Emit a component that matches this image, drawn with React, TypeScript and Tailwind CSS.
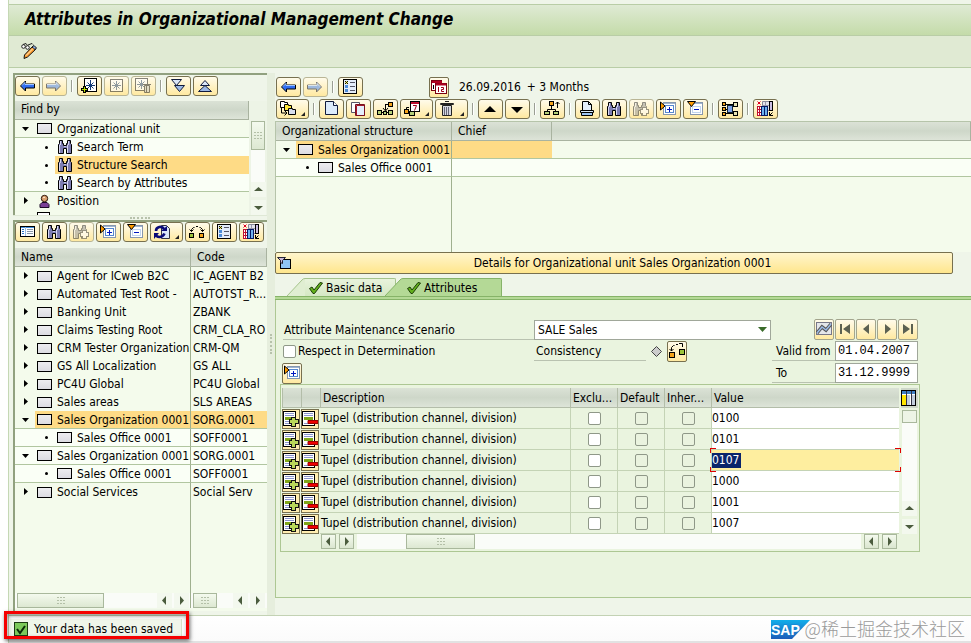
import type { ReactNode } from 'react';

interface TreeItem {
  label: string;
  code?: string;
  state: 'open' | 'closed' | 'leaf';
  level: number;
  icon: 'box' | 'search' | 'person';
  selected?: boolean;
  lined?: boolean;
}

const searchTree: TreeItem[] = [
  { label: 'Organizational unit', state: 'open', level: 0, icon: 'box', lined: true },
  { label: 'Search Term', state: 'leaf', level: 1, icon: 'search' },
  { label: 'Structure Search', state: 'leaf', level: 1, icon: 'search', selected: true },
  { label: 'Search by Attributes', state: 'leaf', level: 1, icon: 'search', lined: true },
  { label: 'Position', state: 'closed', level: 0, icon: 'person' },
];

const units: TreeItem[] = [
  { label: 'Agent for ICweb B2C', code: 'IC_AGENT B2', state: 'closed', level: 0, icon: 'box' },
  { label: 'Automated Test Root -', code: 'AUTOTST_R...', state: 'closed', level: 0, icon: 'box' },
  { label: 'Banking Unit', code: 'ZBANK', state: 'closed', level: 0, icon: 'box' },
  { label: 'Claims Testing Root', code: 'CRM_CLA_RO', state: 'closed', level: 0, icon: 'box' },
  { label: 'CRM Tester Organization', code: 'CRM-QM', state: 'closed', level: 0, icon: 'box' },
  { label: 'GS All Localization', code: 'GS ALL', state: 'closed', level: 0, icon: 'box' },
  { label: 'PC4U Global', code: 'PC4U Global', state: 'closed', level: 0, icon: 'box' },
  { label: 'Sales areas', code: 'SLS AREAS', state: 'closed', level: 0, icon: 'box' },
  { label: 'Sales Organization 0001', code: 'SORG.0001', state: 'open', level: 0, icon: 'box', selected: true, lined: true },
  { label: 'Sales Office 0001', code: 'SOFF0001', state: 'leaf', level: 1, icon: 'box', lined: true },
  { label: 'Sales Organization 0001', code: 'SORG.0001', state: 'open', level: 0, icon: 'box', lined: true },
  { label: 'Sales Office 0001', code: 'SOFF0001', state: 'leaf', level: 1, icon: 'box', lined: true },
  { label: 'Social Services', code: 'Social Serv', state: 'closed', level: 0, icon: 'box' },
];

const structure: TreeItem[] = [
  { label: 'Sales Organization 0001', state: 'open', level: 0, icon: 'box', selected: true, lined: true },
  { label: 'Sales Office 0001', state: 'leaf', level: 1, icon: 'box', lined: true },
];

const values = ['0100', '0101', '0107', '1000', '1001', '1007'];

/* ---------- icons ---------- */

function Svg({ children, className = 'w-4 h-4' }: { children: ReactNode; className?: string }) {
  return (
    <svg viewBox="0 0 16 16" fill="none" className={`${className} shrink-0`} aria-hidden="true">
      {children}
    </svg>
  );
}

const icons = {
  back: (
    <Svg>
      <path d="M1.500 8l5-5v3h9v4h-9v3z" fill="#2f6cf0" stroke="#000" />
      <path d="M3 7.500l3-3v2h9" stroke="#9cc4ff" />
    </Svg>
  ),
  forward: (
    <Svg>
      <path d="M14.500 8l-5-5v3h-9v4h9v3z" fill="#4f8af0" stroke="#112" />
      <path d="M1 6.500h9v-2l3 3" stroke="#c5dcff" />
    </Svg>
  ),
  star: (
    <Svg>
      <rect x="2.500" y="1.500" width="12" height="12" fill="#fff" stroke="#222" />
      <path d="M8.500 3v9M4 7.500h9M5.500 4.500l6 6M11.500 4.500l-6 6" stroke="#34507a" />
    </Svg>
  ),
  starAdd: (
    <Svg>
      <rect x="3.500" y="0.500" width="12" height="13" fill="#fff" stroke="#000" />
      <path d="M9.500 2v10M5 7.500h9M6.500 4.500l6 6M12.500 4.500l-6 6" stroke="#123a78" />
      <path d="M3.500 8v7M0 11.500h7" stroke="#000" strokeWidth="3" />
      <path d="M3.500 9v5M1 11.500h5" stroke="#b8e000" />
    </Svg>
  ),
  starDelete: (
    <Svg>
      <rect x="0.500" y="0.500" width="12" height="12" fill="#fff" stroke="#222" />
      <path d="M6.500 2v9M2 6.500h9M3.500 3.500l6 6M9.500 3.500l-6 6" stroke="#34507a" />
      <path d="M9.500 7.500h5v7h-5z" fill="#ccc" stroke="#222" />
      <path d="M8 6.500h8M11.500 8v6" stroke="#222" />
    </Svg>
  ),
  expandAll: (
    <Svg>
      <path d="M1.500 1.500h10l-5 6z" fill="#dbe6f8" stroke="#101a3c" />
      <path d="M4.500 7.500h10l-5 6z" fill="#9cb8e6" stroke="#101a3c" />
    </Svg>
  ),
  collapseAll: (
    <Svg>
      <path d="M3.500 7.500h9L8 2.500z" fill="#dbe6f8" stroke="#101a3c" />
      <path d="M1.500 13.500h13L8 7.500z" fill="#9cb8e6" stroke="#101a3c" />
    </Svg>
  ),
  list: (
    <Svg>
      <rect x="1.500" y="2.500" width="14" height="10" fill="#fff" stroke="#000" />
      <path d="M2 3.500h4M7 3.500h8" stroke="#3f8ce0" />
      <path d="M6.500 3v9" stroke="#9cc0e8" />
      <path d="M3 5.500h2M3 7.500h2M3 9.500h2" stroke="#2c73c8" />
      <path d="M8 5.500h6M8 7.500h6M8 9.500h6" stroke="#8a97a8" />
    </Svg>
  ),
  find: (
    <Svg>
      <path d="M2.500 1.500h3v3h1v2h3v-2h1v-3h3v3l1 1v9h-5v-5h-3v5h-5v-9l1-1z" fill="#7d7db2" stroke="#000" />
      <path d="M3.500 2v4M2.500 6v8M11.500 2v4M10.500 6v8" stroke="#d8d8f4" />
      <path d="M7 7.500h2" stroke="#c8c8e8" />
    </Svg>
  ),
  findNext: (
    <Svg>
      <path d="M1.500 1.500h3v3h1v2h3v-2h1v-3h3v3l1 1v9h-5v-5h-3v5h-5v-9l1-1z" fill="#999" stroke="#333" />
      <path d="M2.500 2v4M1.500 6v8" stroke="#eee" />
      <path d="M11.500 6v9M7 10.500h9" stroke="#444" strokeWidth="5" />
      <path d="M11.500 7v7M8 10.500h7" stroke="#fff" strokeWidth="3" />
    </Svg>
  ),
  expand: (
    <Svg>
      <rect x="3.500" y="1.500" width="12" height="12" fill="#fff" stroke="#8797ae" />
      <path d="M4 2.500h11" stroke="#9db3d0" />
      <rect x="5.500" y="4.500" width="8" height="7" fill="#fff" stroke="#5688cf" />
      <path d="M9.500 6v5M7 8.500h5" stroke="#0016c0" />
      <path d="M.5 1v8L5 5z" fill="#ff9c00" stroke="#000" />
    </Svg>
  ),
  collapse: (
    <Svg>
      <rect x="3.500" y="1.500" width="12" height="12" fill="#fff" stroke="#8797ae" />
      <path d="M4 2.500h11" stroke="#9db3d0" />
      <rect x="5.500" y="5.500" width="8" height="6" fill="#fff" stroke="#c0d4ee" />
      <path d="M7 8.500h5" stroke="#0016c0" />
      <path d="M.5.500h8l-4 5z" fill="#ff9c00" stroke="#000" />
    </Svg>
  ),
  refresh: (
    <Svg>
      <path d="M7.500 1.500h5l3 3v10h-8z" fill="#dbe6f8" stroke="#334" />
      <path d="M10 5C8 1.500 2 2.500 2 7M1.500 10c1 4 7 4 9-.5" stroke="#0a0a78" strokeWidth="2.600" />
      <path d="M7 7h6V2zM5 9H0v6z" fill="#0a0a78" />
    </Svg>
  ),
  relation: (
    <Svg>
      <path d="M2.500 7.500v-2l2-2h1M7 2.500h2M10.500 3.500h1l2 2v2M.5 5.500l2 2 2-2M11.500 5.500l2 2 2-2" stroke="#000" />
      <rect x="0.500" y="9.500" width="4" height="4" fill="#9dc43c" stroke="#000" />
      <rect x="10.500" y="9.500" width="4" height="4" fill="#f5a31a" stroke="#000" />
    </Svg>
  ),
  checklist: (
    <Svg>
      <rect x="1.500" y="0.500" width="13" height="14" fill="#e3ecfa" stroke="#000" />
      <rect x="3" y="2" width="3" height="3" fill="#f2ee6a" />
      <path d="M3 2l3 3M6 2L3 5" stroke="#111" />
      <rect x="3" y="6" width="3" height="3" fill="#4d8bd8" />
      <rect x="3" y="10" width="3" height="3" fill="#4d8bd8" />
      <path d="M8 3.500h5M8 7.500h5M8 11.500h5" stroke="#556" />
    </Svg>
  ),
  columns: (
    <Svg>
      <path d="M5.500.500h10v9h-10z" fill="#e4e4ec" stroke="#889" />
      <path d="M8.500 1v8M5 4.500h7" stroke="#99a" />
      <rect x="12.500" y="0.500" width="3" height="9" fill="#cdbfe4" stroke="#000" />
      <rect x="0.500" y="5.500" width="4" height="9" fill="#fff" stroke="#c01030" />
      <path d="M1 8.500h4M1 11.500h4M2.500 6v8" stroke="#c01030" />
      <rect x="4.500" y="5.500" width="3" height="9" fill="#6fb2ef" stroke="#061a66" />
      <rect x="7.500" y="5.500" width="3" height="9" fill="#6fb2ef" stroke="#061a66" />
      <path d="M.5.500l3 3M3.500.500l-3 3" stroke="#e00020" />
      <path d="M15.500 11.500l-3 3M12.500 11v3.500H16" stroke="#000" />
    </Svg>
  ),
  calendar: (
    <Svg>
      <rect x="0.500" y="1.500" width="10" height="10" fill="#fff" stroke="#7a0010" />
      <path d="M1 3h10" stroke="#b00020" strokeWidth="2" />
      <path d="M2.500 6v4" stroke="#000" />
      <rect x="4.500" y="4.500" width="11" height="10" fill="#fff" stroke="#7a0010" />
      <path d="M5 5.500h10" stroke="#b00020" strokeWidth="2" />
      <path d="M7.500 8v5M10 8.500h2.500v2h-2v2H13" stroke="#a00018" />
    </Svg>
  ),
  stack: (
    <Svg>
      <path d="M.5.500h4v1h3v5h-7z" fill="#fff" stroke="#000" />
      <path d="M4.500 3.500h4v1h3v5h-7z" fill="#ffe83a" stroke="#000" />
      <path d="M8.500 7.500h4v1h3v5h-7z" fill="#d7dded" stroke="#000" />
      <path d="M1.500 7v5h5M4.500 9.500l2.500 2.500-2.500 2.500" stroke="#000" />
    </Svg>
  ),
  page: (
    <Svg>
      <path d="M2.500.500h8l4 4v9h-12z" fill="#dcebfc" stroke="#101a3c" />
      <path d="M10.500.500v4h4" fill="#fff" stroke="#101a3c" />
    </Svg>
  ),
  copy: (
    <Svg>
      <path d="M1.500 1.500h8v10h-8z" fill="#fff" stroke="#556" />
      <path d="M6.500 4.500h8v10h-8z" fill="#e4eefc" stroke="#a01828" />
      <path d="M5.500 3.500h9v11h-9z" stroke="#7a1020" />
    </Svg>
  ),
  assign: (
    <Svg>
      <path d="M5 11.500h6M8.500 3v6M12 3.500H9M6 7l2.500 3L11 7" stroke="#000" />
      <rect x="0.500" y="9.500" width="4" height="4" fill="#b5cf78" stroke="#000" />
      <rect x="6.500" y="10.500" width="3" height="3" fill="#b5cf78" stroke="#000" />
      <rect x="11.500" y="9.500" width="4" height="4" fill="#b5cf78" stroke="#000" />
      <rect x="11.500" y="1.500" width="4" height="4" fill="#f5a31a" stroke="#000" />
    </Svg>
  ),
  assignDate: (
    <Svg>
      <path d="M2.500 8V6.500H5M5 12.500h3" stroke="#000" />
      <rect x="0.500" y="8.500" width="4" height="4" fill="#f5a31a" stroke="#000" />
      <rect x="5.500" y="10.500" width="5" height="4" fill="#b5cf78" stroke="#000" />
      <rect x="6.500" y="0.500" width="9" height="10" fill="#fff" stroke="#000" />
      <path d="M7 2h8" stroke="#c01030" strokeWidth="2" />
      <path d="M9 4.500h3.500l-2 5" stroke="#a00018" />
    </Svg>
  ),
  trash: (
    <Svg>
      <path d="M3.500 4.500h9v10h-9z" fill="#d5d8e2" stroke="#222" />
      <path d="M5.500 6v8M7.500 6v8M9.500 6v8" stroke="#667" />
      <path d="M1.500 2.500h13v1h-13z" fill="#fff" stroke="#222" />
      <path d="M6 .500h4" stroke="#222" />
    </Svg>
  ),
  up: (
    <Svg>
      <path d="M2 11h12L8 5z" fill="#000" />
    </Svg>
  ),
  down: (
    <Svg>
      <path d="M2 6h12l-6 6z" fill="#000" />
    </Svg>
  ),
  moveUp: (
    <Svg>
      <path d="M7.500 5v3M3.500 10V8.500h8V10M13.500 1v6M11.500 3l2-2 2 2" stroke="#000" />
      <rect x="5.500" y="0.500" width="4" height="4" fill="#f5a31a" stroke="#000" />
      <rect x="0.500" y="10.500" width="5" height="3" fill="#b5cf78" stroke="#000" />
      <rect x="9.500" y="10.500" width="5" height="3" fill="#b5cf78" stroke="#000" />
    </Svg>
  ),
  print: (
    <Svg>
      <path d="M3.500.500h6l3 3v6h-9z" fill="#e4effc" stroke="#000" />
      <path d="M9.500.500v3h3" stroke="#000" />
      <path d="M1.500 9.500h13v2h-13z" fill="#d7e8fb" stroke="#000" />
      <path d="M2.500 11.500h11v3h-11z" fill="#9cc4f4" stroke="#000" />
    </Svg>
  ),
  network: (
    <Svg>
      <path d="M4 3.500h8M4 8.500h3M4 12.500h8" stroke="#000" />
      <rect x="5.500" y="4.500" width="5" height="7" fill="#7fa3e8" stroke="#123" />
      <rect x="0.500" y="1.500" width="3" height="3" fill="#f5a31a" stroke="#000" />
      <rect x="0.500" y="6.500" width="3" height="3" fill="#f5a31a" stroke="#000" />
      <rect x="0.500" y="11.500" width="3" height="3" fill="#f5a31a" stroke="#000" />
      <rect x="11.500" y="1.500" width="4" height="4" fill="#e9e4b4" stroke="#000" />
      <rect x="11.500" y="10.500" width="4" height="4" fill="#e9e4b4" stroke="#000" />
    </Svg>
  ),
  link: (
    <Svg>
      <path d="M2.500 8V4.500l2-2h1M7 1.500h2M10 .5h3.500V4M.5 6l2 2 2-2" stroke="#000" />
      <rect x="0.500" y="9.500" width="5" height="5" fill="#f5a31a" stroke="#000" />
      <rect x="10.500" y="6.500" width="5" height="5" fill="#9dc43c" stroke="#000" />
    </Svg>
  ),
  overview: (
    <Svg>
      <rect x="0.500" y="1.500" width="15" height="12" fill="#e4e6ea" stroke="#778" />
      <path d="M1 12l5-6 4 3 5-6" stroke="#555" strokeWidth="3.500" />
      <path d="M1 12l5-6 4 3 5-6" stroke="#9dbbe8" strokeWidth="1.500" />
    </Svg>
  ),
  first: (
    <Svg>
      <path d="M3 3h2v10H3zM13 3v10L6 8z" fill="#5c6152" />
    </Svg>
  ),
  prev: (
    <Svg>
      <path d="M11 3v10L5 8z" fill="#5c6152" />
    </Svg>
  ),
  next: (
    <Svg>
      <path d="M6 3v10l6-5z" fill="#5c6152" />
    </Svg>
  ),
  last: (
    <Svg>
      <path d="M11 3h2v10h-2zM3 3v10l7-5z" fill="#5c6152" />
    </Svg>
  ),
  rowAdd: (
    <Svg>
      <rect x="0.500" y="0.500" width="12" height="14" fill="#fff" stroke="#000" />
      <path d="M2 2.500h9M2 4.500h9M2 10.500h5M2 12.500h5" stroke="#8a94cc" />
      <path d="M2 7.500h9" stroke="#7fa618" strokeWidth="3" />
      <path d="M10.500 6v10M6 10.500h10" stroke="#111" strokeWidth="5" />
      <path d="M10.500 7v8M7 10.500h8" stroke="#b9d85a" strokeWidth="3" />
    </Svg>
  ),
  rowDelete: (
    <Svg>
      <rect x="0.500" y="0.500" width="12" height="14" fill="#fff" stroke="#000" />
      <path d="M2 2.500h9M2 4.500h9M2 12.500h5" stroke="#8a94cc" />
      <path d="M2 7.500h9" stroke="#7fa618" strokeWidth="3" />
      <path d="M6 9.500h10v3H6z" fill="#f00000" stroke="#900" />
    </Svg>
  ),
};

type IconName = keyof typeof icons;

function GlassesPencil() {
  return (
    <svg viewBox="0 0 16 16" fill="none" className="w-4 h-4" aria-hidden="true">
      <circle cx="2.500" cy="3.500" r="1.800" fill="#fff" stroke="#222" />
      <circle cx="6.500" cy="4.500" r="1.800" fill="#fff" stroke="#222" />
      <path d="M2 1.500L5 .5l1.500 2M7 2l4-1.500 1 1" stroke="#222" />
      <path d="M3.500 12L12 3l3 3-8.500 8L3 15.500z" fill="#ff9c2e" stroke="#111" />
      <path d="M11 4l2-1.500L15.500 5 14 6.500z" fill="#8fb0e8" stroke="#111" />
      <path d="M5 12.500l7-7" stroke="#fff1c8" />
    </svg>
  );
}

function UnitBox() {
  return <span className="w-[15px] h-[11px] shrink-0 border border-black bg-linear-to-b from-[#ededf0] to-[#dcdce2]" />;
}

function Person() {
  return (
    <svg viewBox="0 0 15 15" fill="none" className="w-[15px] h-[15px] shrink-0" aria-hidden="true">
      <path d="M3 13.500v-3l2-2h5l2 2v3z" fill="#7a3f96" stroke="#1c0a28" />
      <circle cx="7.500" cy="4.500" r="3.200" fill="#d9a070" stroke="#2b160a" />
      <path d="M6 3.500h2" stroke="#fbe0c4" />
    </svg>
  );
}

function GreenCheck() {
  return (
    <svg viewBox="0 0 14 12" className="w-[14px] h-3" aria-hidden="true">
      <path d="M.500 6.500L3 5l2 3 6-7.500 2.500.5-8 10.500H4z" fill="#62b01c" stroke="#1c3d08" />
    </svg>
  );
}

/* ---------- small controls ---------- */

interface ToolButtonProps {
  icon: IconName;
  label: string;
  menu?: boolean;
  disabled?: boolean;
}

function ToolButton({ icon, label, menu, disabled }: ToolButtonProps) {
  return (
    <button
      type="button"
      aria-label={label}
      disabled={disabled}
      className={`flex h-5 shrink-0 items-center rounded-[3px] border bg-linear-to-b from-[#fffbea] to-[#ffe9a0] pl-[3px] ${
        menu ? 'w-[33px]' : 'w-[25px]'
      } ${disabled ? 'border-[#b9b595]' : 'border-[#77704f]'}`}
    >
      <span className={disabled ? 'opacity-55' : ''}>{icons[icon]}</span>
      {menu && (
        <svg viewBox="0 0 4 4" className="ml-auto mr-[3px] mt-[10px] h-1 w-1" aria-hidden="true">
          <path d="M4 0v4H0z" fill="#222" />
        </svg>
      )}
    </button>
  );
}

function SquareButton({ icon, label, muted }: { icon: IconName; label: string; muted?: boolean }) {
  return (
    <button
      type="button"
      aria-label={label}
      className={`flex h-[21px] w-5 shrink-0 items-start justify-center rounded-[2px] border bg-linear-to-b from-[#fffbea] to-[#ffe9a0] pt-px ${
        muted ? 'border-[#a3a58d]' : 'border-[#77704f]'
      }`}
    >
      {icons[icon]}
    </button>
  );
}

function Separator() {
  return <span className="mx-[2px] h-3 w-[2px] border-l border-[#9a9f93] bg-white" />;
}

function Triangle({ dir }: { dir: 'up' | 'down' | 'left' | 'right' }) {
  const paths = {
    up: 'M0 6l4.500-4L9 6z',
    down: 'M0 3h9L4.500 7z',
    left: 'M6 0v9L2 4.500z',
    right: 'M3 0v9l4-4.500z',
  };
  return (
    <svg viewBox="0 0 9 9" className="h-[9px] w-[9px]" aria-hidden="true">
      <path d={paths[dir]} fill="#4b5c3e" />
    </svg>
  );
}

function ScrollButton({ dir, boxed }: { dir: 'up' | 'down' | 'left' | 'right'; boxed?: boolean }) {
  return (
    <button
      type="button"
      aria-label={`Scroll ${dir}`}
      className={`flex h-[15px] w-[15px] shrink-0 items-center justify-center ${
        boxed ? 'border border-[#a9b89c] bg-linear-to-b from-[#f4faee] to-[#dbe6d0]' : 'bg-[#f3f8ee]'
      }`}
    >
      <Triangle dir={dir} />
    </button>
  );
}

function Grip() {
  return (
    <svg viewBox="0 0 8 7" className="h-[7px] w-2" aria-hidden="true">
      <path d="M0 .500h2M3 .500h2M6 .500h2M0 3.500h2M3 3.500h2M6 3.500h2M0 6.500h2M3 6.500h2M6 6.500h2" stroke="#b4c0a8" />
    </svg>
  );
}

function Thumb({ className }: { className: string }) {
  return (
    <div className={`flex items-center justify-center border border-[#a9b89c] bg-linear-to-b from-[#f4faee] to-[#dde8d2] ${className}`}>
      <Grip />
    </div>
  );
}

function TreeLabel({ item }: { item: TreeItem }) {
  return (
    <div className={`flex h-full items-center ${item.level ? 'pl-[20px]' : ''}`}>
      <span className="flex w-5 shrink-0 items-center justify-center pl-[2px]">
        {item.state === 'open' && (
          <svg viewBox="0 0 8 8" className="h-2 w-2" aria-hidden="true">
            <path d="M0 2h7L3.500 6z" />
          </svg>
        )}
        {item.state === 'closed' && (
          <svg viewBox="0 0 8 8" className="h-2 w-2" aria-hidden="true">
            <path d="M2 0v7l4-3.500z" />
          </svg>
        )}
        {item.state === 'leaf' && <span className="h-[3px] w-[3px] rounded-full bg-black" />}
      </span>
      <span className={`flex h-full min-w-0 flex-1 items-center gap-[5px] pl-[2px] ${item.selected ? 'bg-[#fedb86]' : ''}`}>
        {item.icon === 'box' && <UnitBox />}
        {item.icon === 'search' && <span className="w-[15px] shrink-0">{icons.find}</span>}
        {item.icon === 'person' && <Person />}
        <span className="whitespace-nowrap">{item.label}</span>
      </span>
    </div>
  );
}

const headerCell = 'h-[19px] border-b border-r border-[#a9b3a0] bg-linear-to-b from-[#dbe2d6] via-[#ced7c9] to-[#dde4d8] p-0 pl-[6px] text-left font-normal';

/* ---------- left side ---------- */

function SearchPanel() {
  return (
    <section className="border-l-2 border-t-2 border-[#91a17f]">
      <div className="flex h-[26px] items-start gap-[2px] pt-px">
        <ToolButton icon="back" label="Back" />
        <ToolButton icon="forward" label="Forward" disabled />
        <div className="flex h-5 items-center">
          <Separator />
        </div>
        <ToolButton icon="starAdd" label="Create search variant" />
        <ToolButton icon="star" label="Search variant" disabled />
        <ToolButton icon="starDelete" label="Delete search variant" disabled />
        <div className="flex h-5 items-center">
          <Separator />
        </div>
        <ToolButton icon="expandAll" label="Expand all" />
        <ToolButton icon="collapseAll" label="Collapse all" />
      </div>
      <div className="flex h-[114px] bg-[#f4fbec]">
        <div className="flex-1 overflow-hidden">
          <div className={headerCell}>Find by</div>
          <ul>
            {searchTree.map((item) => (
              <li key={item.label} className={`h-[18px] ${item.lined ? 'border-b border-[#b1c6a0]' : ''} ${item.level ? 'bg-[#fafff6]' : ''}`}>
                <TreeLabel item={item} />
              </li>
            ))}
            <li className="flex h-[5px] items-end overflow-hidden pl-[22px]">
              <span className="h-[3px] w-[13px] border border-b-0 border-black bg-white" />
            </li>
          </ul>
        </div>
        <div className="flex w-[18px] flex-col items-center bg-[#edf4e6] pt-5">
          <Thumb className="h-[29px] w-[14px]" />
          <div className="w-[14px] flex-1 bg-[#fafcf8]" />
          <ScrollButton dir="up" />
          <span className="h-[3px]" />
          <ScrollButton dir="down" />
        </div>
      </div>
    </section>
  );
}

function ResultPanel() {
  return (
    <section className="flex flex-1 flex-col border-l-2 border-t-2 border-[#91a17f]">
      <div className="flex h-[26px] items-start gap-[2px]">
        <ToolButton icon="list" label="Details" />
        <ToolButton icon="find" label="Find" />
        <ToolButton icon="findNext" label="Find next" disabled />
        <ToolButton icon="expand" label="Expand node" />
        <ToolButton icon="collapse" label="Collapse node" />
        <ToolButton icon="refresh" label="Refresh" menu />
        <ToolButton icon="relation" label="Relationships" />
        <ToolButton icon="checklist" label="Legend" />
        <ToolButton icon="columns" label="Column configuration" />
      </div>
      <div className="flex flex-1 flex-col bg-[#f4fbec]">
        <table className="w-full table-fixed border-separate border-spacing-0">
          <thead>
            <tr>
              <th className={`w-[176px] ${headerCell}`}>Name</th>
              <th className={headerCell}>Code</th>
            </tr>
          </thead>
          <tbody>
            {units.map((unit, i) => (
              <tr key={i} className={unit.lined && !unit.selected ? 'bg-[#fafff6]' : ''}>
                <td className={`h-[18px] overflow-hidden border-r border-r-[#9fb08f] p-0 ${unit.lined ? 'border-b border-b-[#b1c6a0]' : ''}`}>
                  <div className={unit.lined ? 'h-[17px]' : 'h-[18px]'}>
                    <TreeLabel item={unit} />
                  </div>
                </td>
                <td
                  className={`overflow-hidden whitespace-nowrap p-0 pl-[2px] ${unit.lined ? 'border-b border-b-[#b1c6a0]' : ''} ${
                    unit.selected ? 'bg-[#fedb86]' : ''
                  }`}
                >
                  {unit.code}
                </td>
              </tr>
            ))}
          </tbody>
        </table>
        <div className="flex-1">
          <div className="h-full w-[176px] border-r border-[#9fb08f]" />
        </div>
        <div className="flex h-[18px] items-start">
          <div className="flex w-[176px] items-center gap-[2px] border-r border-[#9fb08f] bg-[#fafcf8] pl-[2px] pr-px">
            <Thumb className="h-[15px] w-[87px]" />
            <span className="flex-1" />
            <ScrollButton dir="left" />
            <ScrollButton dir="right" />
          </div>
          <div className="flex flex-1 items-center gap-[2px] bg-[#fafcf8] pl-[2px] pr-[2px]">
            <Thumb className="h-[15px] w-6" />
            <span className="flex-1" />
            <ScrollButton dir="left" />
            <ScrollButton dir="right" />
          </div>
        </div>
      </div>
    </section>
  );
}

/* ---------- right side ---------- */

function StructurePanel() {
  return (
    <section>
      <div className="flex h-6 items-center gap-[2px] pl-px pt-1">
        <ToolButton icon="back" label="Back" />
        <ToolButton icon="forward" label="Forward" disabled />
        <Separator />
        <ToolButton icon="checklist" label="Legend" />
        <span className="w-[62px]" />
        <SquareButton icon="calendar" label="Choose date" />
        <span className="pl-2">26.09.2016</span>
        <span className="pl-1">+ 3 Months</span>
      </div>
      <div className="flex h-6 items-center gap-[2px] pl-px">
        <ToolButton icon="stack" label="Goto" menu />
        <Separator />
        <ToolButton icon="page" label="Create" />
        <ToolButton icon="copy" label="Copy" />
        <ToolButton icon="assign" label="Assign" />
        <ToolButton icon="assignDate" label="Change assignment" menu />
        <ToolButton icon="trash" label="Delete" menu />
        <Separator />
        <ToolButton icon="up" label="Move up" />
        <ToolButton icon="down" label="Move down" />
        <Separator />
        <ToolButton icon="moveUp" label="One level up" />
        <Separator />
        <ToolButton icon="print" label="Print" />
        <ToolButton icon="find" label="Find" />
        <ToolButton icon="findNext" label="Find next" disabled />
        <ToolButton icon="expand" label="Expand node" />
        <ToolButton icon="collapse" label="Collapse node" />
        <Separator />
        <ToolButton icon="network" label="Structure graphic" />
        <Separator />
        <ToolButton icon="columns" label="Column configuration" />
      </div>
      <div className="flex h-[131px] flex-col border-l border-t border-[#b6c4aa] bg-[#f4fbec]">
        <table className="w-full table-fixed border-separate border-spacing-0">
          <thead>
            <tr>
              <th className={`w-[176px] ${headerCell}`}>Organizational structure</th>
              <th className={`w-[100px] ${headerCell}`}>Chief</th>
              <th className={headerCell} />
            </tr>
          </thead>
          <tbody>
            {structure.map((item) => (
              <tr key={item.label} className={item.selected ? '' : 'bg-[#fafff6]'}>
                <td className="h-[18px] border-b border-r border-b-[#b1c6a0] border-r-[#9fb08f] p-0">
                  <div className="h-[17px]">
                    <TreeLabel item={item} />
                  </div>
                </td>
                <td className={`border-b border-[#b1c6a0] p-0 ${item.selected ? 'bg-[#fedb86]' : ''}`} />
                <td className="border-b border-[#b1c6a0] p-0" />
              </tr>
            ))}
          </tbody>
        </table>
        <div className="w-[176px] flex-1 border-r border-[#9fb08f]" />
      </div>
    </section>
  );
}

function TabSlope({ fill, line }: { fill: string; line: string }) {
  return (
    <svg viewBox="0 0 18 18" className="h-[18px] w-[18px]" aria-hidden="true">
      <path d="M0 18L15 2Q16 .5 18 .5V18z" fill={fill} />
      <path d="M0 18L15 2Q16 .5 18 .5" fill="none" stroke={line} />
    </svg>
  );
}

function Tabs() {
  return (
    <div className="mt-1 flex h-[18px] pl-3" role="tablist">
      <button type="button" role="tab" aria-selected="false" className="flex">
        <TabSlope fill="#e0eed2" line="#a5c48c" />
        <span className="flex h-[18px] w-[91px] items-center gap-[3px] rounded-tr-[2px] border-r border-t border-[#a5c48c] bg-linear-to-b from-[#e8f3dc] to-[#d5e8c4] pl-1">
          <GreenCheck />
          Basic data
        </span>
      </button>
      <button type="button" role="tab" aria-selected="true" className="relative -ml-[11px] flex">
        <TabSlope fill="#b4d996" line="#86b368" />
        <span className="flex h-[18px] w-[99px] items-center gap-[3px] rounded-tr-[2px] border-r border-t border-[#86b368] bg-[#b4d996] pl-1">
          <GreenCheck />
          Attributes
        </span>
      </button>
    </div>
  );
}

const attrHead = 'h-5 overflow-hidden whitespace-nowrap border-b border-l border-[#b3bda9] bg-linear-to-b from-[#dbe2d6] via-[#ced7c9] to-[#dde4d8] p-0 pl-[2px] text-left font-normal';
const attrCell = 'border-b border-l border-[#c4d3b5] p-0';

function Tick({ label, blank }: { label: string; blank?: boolean }) {
  return (
    <input
      type="checkbox"
      aria-label={label}
      className={`block h-[13px] w-[13px] shrink-0 appearance-none rounded-[2px] border border-[#8f9888] ${blank ? 'bg-white' : 'bg-[#eaf3df]'}`}
    />
  );
}

function AttributeTable() {
  return (
    <div className="w-[640px] border border-[#adc793] pb-[2px] pl-px pt-[3px]">
      <div className="flex gap-[2px]">
        <table className="w-[617px] table-fixed border-separate border-spacing-0">
          <thead>
            <tr>
              <th className={`w-[19px] ${attrHead}`} />
              <th className={`w-[19px] ${attrHead}`} />
              <th className={attrHead}>Description</th>
              <th className={`w-[47px] ${attrHead}`}>Exclu...</th>
              <th className={`w-[47px] ${attrHead}`}>Default</th>
              <th className={`w-[47px] ${attrHead}`}>Inher...</th>
              <th className={`w-[188px] ${attrHead}`}>Value</th>
            </tr>
          </thead>
          <tbody>
            {values.map((value) => {
              const active = value === '0107';
              return (
                <tr key={value}>
                  <td className="h-[21px] p-0">
                    <button type="button" aria-label="Insert row" className="flex h-5 w-[18px] items-center justify-center border border-[#77704f] bg-[#ffedb0]">
                      {icons.rowAdd}
                    </button>
                  </td>
                  <td className="p-0">
                    <button type="button" aria-label="Delete row" className="flex h-5 w-[18px] items-center justify-center border border-[#77704f] bg-[#ffedb0]">
                      {icons.rowDelete}
                    </button>
                  </td>
                  <td className="whitespace-nowrap border-b border-[#c4d3b5] p-0 pl-px">Tupel (distribution channel, division)</td>
                  <td className={attrCell}>
                    <div className="flex justify-center">
                      <Tick label="Excluded" blank />
                    </div>
                  </td>
                  <td className={attrCell}>
                    <div className="flex justify-center">
                      <Tick label="Default" />
                    </div>
                  </td>
                  <td className={attrCell}>
                    <div className="flex justify-center">
                      <Tick label="Inherited" />
                    </div>
                  </td>
                  <td className={`${attrCell} ${active ? 'relative z-10 bg-[#feee9f]' : 'bg-white'}`}>
                    <input
                      type="text"
                      aria-label="Value"
                      defaultValue={value}
                      className={`block h-[15px] leading-[15px] outline-none ${active ? 'w-[29px] bg-[#0a246a] text-white' : 'w-full'}`}
                    />
                    {active && (
                      <>
                        <span className="absolute -left-[2px] -top-[2px] h-[5px] w-[6px] border-l border-t border-[#e00000]" />
                        <span className="absolute -right-[2px] -top-[2px] h-[5px] w-[6px] border-r border-t border-[#e00000]" />
                        <span className="absolute -bottom-[2px] -left-[2px] h-[5px] w-[6px] border-b border-l border-[#e00000]" />
                        <span className="absolute -bottom-[2px] -right-[2px] h-[5px] w-[6px] border-b border-r border-[#e00000]" />
                      </>
                    )}
                  </td>
                </tr>
              );
            })}
          </tbody>
        </table>
        <div className="flex w-[17px] flex-col items-center">
          <button type="button" aria-label="Table settings" className="mb-[2px] flex h-5 w-[17px] items-center bg-[#ced7c9]">
            <Svg>
              <rect x="0.500" y="0.500" width="14" height="15" fill="#fff" stroke="#000" />
              <path d="M1 2.500h13" stroke="#3f7fc4" strokeWidth="3" />
              <path d="M1 5h4v10H1z" fill="#ffe600" />
              <path d="M6 5h3v10H6zM11 5h3v10h-3z" fill="#c3cedd" />
              <path d="M5.500 1v14M10.500 1v14" stroke="#334" />
            </Svg>
          </button>
          <span className="h-[13px] w-[15px] border border-[#a9b89c] bg-[#edf4e6]" />
          <span className="w-[15px] flex-1 bg-[#fafcf8]" />
          <ScrollButton dir="up" />
          <span className="h-[3px]" />
          <ScrollButton dir="down" />
        </div>
      </div>
      <div className="flex items-center gap-[3px] pl-[39px] pr-[22px]">
        <ScrollButton dir="left" boxed />
        <ScrollButton dir="right" boxed />
        <div className="flex h-[15px] flex-1 bg-[#fafcf8] pl-[49px]">
          <Thumb className="h-[15px] w-[69px]" />
        </div>
        <ScrollButton dir="left" boxed />
        <ScrollButton dir="right" boxed />
      </div>
    </div>
  );
}

function AttributesForm() {
  return (
    <div className="flex-1 border-b border-l border-[#adc793] bg-[#eaf4df] pl-1 pt-[19px]">
      <div className="flex w-[640px] items-end justify-between pl-[3px]">
        <div className="flex items-end">
          <label htmlFor="scenario" className="h-5 w-[251px] border-b border-[#b9c2b0] pl-px leading-5">
            Attribute Maintenance Scenario
          </label>
          <div className="relative">
            <select
              id="scenario"
              defaultValue="sale"
              className="block h-5 w-[237px] appearance-none border border-[#a0a79a] bg-white pl-[3px] leading-[18px]"
            >
              <option value="sale">SALE Sales</option>
            </select>
            <svg viewBox="0 0 9 5" className="pointer-events-none absolute right-[4px] top-[7px] h-[5px] w-[9px]" aria-hidden="true">
              <path d="M0 0h9L4.500 5z" fill="#3a6b2a" />
            </svg>
          </div>
        </div>
        <div className="flex gap-px pr-[2px]">
          <SquareButton icon="overview" label="Periods overview" muted />
          <SquareButton icon="first" label="First period" muted />
          <SquareButton icon="prev" label="Previous period" muted />
          <SquareButton icon="next" label="Next period" muted />
          <SquareButton icon="last" label="Last period" muted />
        </div>
      </div>

      <div className="flex h-[22px] w-[640px] items-center justify-between pl-[3px]">
        <div className="flex items-center">
          <label className="flex w-[251px] items-center gap-[2px]">
            <input type="checkbox" className="h-[13px] w-[13px] appearance-none rounded-[2px] border border-[#8f9888] bg-white" />
            Respect in Determination
          </label>
          <span className="h-[19px] w-[112px] border-b border-[#b9c2b0] pl-[2px] leading-[18px]">Consistency</span>
          <svg viewBox="0 0 11 11" className="mx-[5px] h-[11px] w-[11px]" aria-hidden="true">
            <path d="M5.500.5l5 5-5 5-5-5z" fill="#ccc" stroke="#444" />
          </svg>
          <SquareButton icon="link" label="Check consistency" />
        </div>
        <div className="flex items-end pr-[2px]">
          <label htmlFor="from" className="h-5 w-[63px] border-b border-[#b9c2b0] pl-1 leading-5">
            Valid from
          </label>
          <input
            id="from"
            type="text"
            defaultValue="01.04.2007"
            className="h-5 w-[83px] border border-[#a0a79a] bg-white pl-[2px] font-['Liberation_Mono',monospace] outline-none"
          />
        </div>
      </div>

      <div className="flex h-[22px] w-[640px] items-center justify-between pl-[2px]">
        <SquareButton icon="expand" label="Expand attributes" />
        <div className="flex items-end pr-[2px]">
          <label htmlFor="to" className="h-5 w-[63px] border-b border-[#b9c2b0] pl-1 leading-5">
            To
          </label>
          <input
            id="to"
            type="text"
            defaultValue="31.12.9999"
            className="h-5 w-[83px] border border-[#a0a79a] bg-white pl-[2px] font-['Liberation_Mono',monospace] outline-none"
          />
        </div>
      </div>

      <AttributeTable />
    </div>
  );
}

/* ---------- page ---------- */

function StatusBar() {
  return (
    <footer className="relative flex h-7 items-center border-b-2 border-t border-b-[#e2e2e2] border-t-[#c3d2b4] bg-linear-to-b from-white to-[#fbfbfb]">
      <div className="ml-px flex h-5 w-[172px] items-center gap-[6px] border-r border-[#d5e2c8] bg-[#f0f6ea] pl-1">
        <svg viewBox="0 0 14 14" className="h-[14px] w-[14px]" aria-hidden="true">
          <rect x="0.500" y="0.500" width="13" height="13" fill="#7cc95a" stroke="#1c3b12" />
          <path d="M3 7l3 4 5-7" fill="none" stroke="#0a2a06" strokeWidth="2" />
        </svg>
        <span>Your data has been saved</span>
      </div>
      <div className="ml-auto flex items-start self-start pr-[6px] pt-1">
        <svg viewBox="0 0 39 19" className="h-[19px] w-[39px]" role="img" aria-label="SAP">
          <defs>
            <linearGradient id="sap" x1="0" y1="0" x2="0" y2="1">
              <stop offset="0" stopColor="#12aeea" />
              <stop offset="1" stopColor="#1c5cb8" />
            </linearGradient>
          </defs>
          <path d="M0 0h39L21 19H0z" fill="url(#sap)" />
          <text
            x="0"
            y="15"
            fontSize="14"
            fontWeight="bold"
            fontFamily="Liberation Sans, sans-serif"
            fill="#fff"
            stroke="#1c7fd0"
            strokeWidth="1"
            paintOrder="stroke"
          >
            SAP
          </text>
        </svg>
        <span className="-ml-[5px] font-['Noto_Sans_CJK_SC',sans-serif] text-[18px] leading-4 font-light text-[#9a9a9a]">@稀土掘金技术社区</span>
      </div>
      {/* highlight frame around the message */}
      <div className="absolute -left-[5px] -top-[5px] h-7 w-[185px] border-[3px] border-[#f50000] shadow-[1px_2px_4px_rgba(0,0,0,0.6),inset_1px_2px_4px_rgba(0,0,0,0.4)]" />
    </footer>
  );
}

export default function App() {
  return (
    <div className="flex min-h-screen flex-col bg-white pl-2 font-['DejaVu_Sans_Condensed','DejaVu_Sans',sans-serif] text-[12px] leading-[16px] text-black">
      <div className="flex flex-1 flex-col border-l border-[#c5d8b4] bg-[#eff5e9] pt-1">
        <header>
          <h1 className="flex h-8 items-center border-y border-[#b9cda6] bg-linear-to-b from-[#dfead4] to-[#c4dba9] pb-[2px] pl-4 text-[17px] font-bold italic">
            Attributes in Organizational Management Change
          </h1>
          <div className="flex h-8 items-center border-b border-[#b9cda6] bg-[#e0ead3] pl-3">
            <button type="button" aria-label="Display and change" className="pb-px">
              <GlassesPencil />
            </button>
          </div>
        </header>

        <main className="flex flex-1 pt-[5px]">
          <div className="ml-1 flex w-[254px] shrink-0 flex-col pb-1">
            <SearchPanel />
            <div className="flex h-[5px] items-center justify-center border-t border-[#dfe8d6]">
              <span className="w-5 border-t-2 border-dotted border-[#b7c2ab]" />
            </div>
            <ResultPanel />
          </div>
          <div className="flex w-2 shrink-0 items-center justify-center bg-[#e6eedd]">
            <span className="h-5 border-l-2 border-dotted border-[#b7c2ab]" />
          </div>
          <div className="flex min-w-0 flex-1 flex-col pb-[17px]">
            <StructurePanel />
            <button
              type="button"
              className="mr-[18px] flex h-[22px] items-center rounded-[2px] border border-[#77704f] bg-linear-to-b from-[#fff5cc] to-[#ffe68c] pl-px"
            >
              <Svg>
                <rect x="3.500" y="4.500" width="10" height="9" fill="#8fc6f5" stroke="#000" />
                <path d="M.5 2.500h8l-3 3v3l-2-1v-2z" fill="#c8b8d8" stroke="#223" />
              </Svg>
              <span className="flex-1 text-center">Details for Organizational unit Sales Organization 0001</span>
            </button>
            <Tabs />
            <div className="h-1 shrink-0 border-y border-[#86b368] bg-[#b4d996]" />
            <AttributesForm />
          </div>
        </main>
        <StatusBar />
      </div>
    </div>
  );
}
